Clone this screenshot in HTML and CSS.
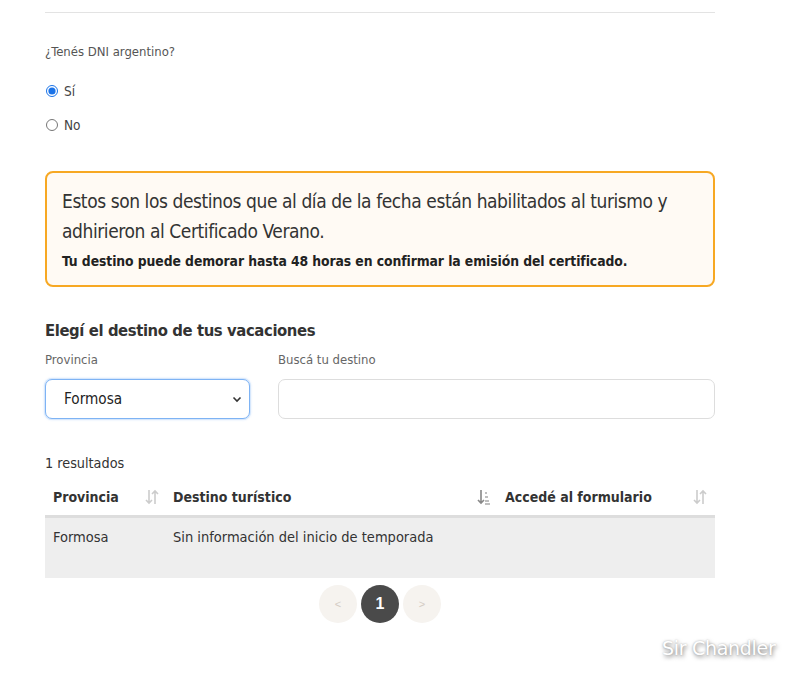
FILE: index.html
```html
<!DOCTYPE html>
<html lang="es">
<head>
<meta charset="utf-8">
<link rel="stylesheet" href="styles.css">
</head>
<body>
<main class="page">
  <hr class="rule">
  <div class="question">
    <p class="q-label">¿Tenés DNI argentino?</p>
    <label class="radio radio-yes"><input type="radio" name="dni" checked> <span>Sí</span></label>
    <label class="radio radio-no"><input type="radio" name="dni"> <span>No</span></label>
  </div>

  <div class="alert">
    <p class="alert-lead">Estos son los destinos que al día de la fecha están habilitados al turismo y adhirieron al Certificado Verano.</p>
    <p class="alert-note">Tu destino puede demorar hasta 48 horas en confirmar la emisión del certificado.</p>
  </div>

  <h2 class="section-title">Elegí el destino de tus vacaciones</h2>
  <div class="filters">
    <div class="field field-select">
      <label class="field-label">Provincia</label>
      <div class="select">
        <span>Formosa</span>
        <svg class="chev" width="10" height="7" viewBox="0 0 10 7"><path d="M1.5 1.5 L5 5 L8.5 1.5" fill="none" stroke="#333" stroke-width="1.6"/></svg>
      </div>
    </div>
    <div class="field field-search">
      <label class="field-label">Buscá tu destino</label>
      <div class="input"></div>
    </div>
  </div>

  <p class="count">1 resultados</p>
  <table class="results">
    <thead>
      <tr>
        <th class="c1"><div class="th"><span>Provincia</span><svg class="sort" width="14" height="16" viewBox="0 0 14 16"><path d="M4 1v13M1 11l3 3 3-3M10 15V2M7 5l3-3 3 3" fill="none" stroke="#ccc" stroke-width="1.6"/></svg></div></th>
        <th class="c2"><div class="th"><span>Destino turístico</span><svg class="sort" width="14" height="16" viewBox="0 0 14 16"><path d="M4 1v13M1 11l3 3 3-3" fill="none" stroke="#888" stroke-width="1.6"/><path d="M8 4h2M8 8h3M8 12h4M8 15h5" fill="none" stroke="#aaa" stroke-width="1.4"/></svg></div></th>
        <th class="c3"><div class="th"><span>Accedé al formulario</span><svg class="sort" width="14" height="16" viewBox="0 0 14 16"><path d="M4 1v13M1 11l3 3 3-3M10 15V2M7 5l3-3 3 3" fill="none" stroke="#ccc" stroke-width="1.6"/></svg></div></th>
      </tr>
    </thead>
    <tbody>
      <tr>
        <td>Formosa</td>
        <td>Sin información del inicio de temporada</td>
        <td></td>
      </tr>
    </tbody>
  </table>

  <nav class="pager">
    <span class="pg pg-off">&lt;</span>
    <span class="pg pg-on">1</span>
    <span class="pg pg-off">&gt;</span>
  </nav>
</main>
<div class="watermark">Sir Chandler</div>
</body>
</html>
```
FILE: styles.css
```css
* { box-sizing: border-box; }
html, body { margin: 0; padding: 0; background: #fff; }
body {
  font-family: "DejaVu Sans Condensed", "Roboto", sans-serif;
  color: #333;
  width: 800px;
  height: 681px;
  overflow: hidden;
  position: relative;
}
.page {
  width: 670px;
  margin-left: 45px;
  padding-top: 12px;
}
.rule {
  border: 0;
  border-top: 1px solid #e3e3e3;
  margin: 0;
}
.question { display: flex; flex-direction: column; }
.q-label {
  margin: 30px 0 0;
  font-size: 13px;
  color: #555;
  line-height: 18px;
}
.radio {
  display: flex;
  align-items: center;
  gap: 6px;
  font-size: 13.5px;
  color: #444;
  height: 18px;
}
.radio input { margin: 0 0 0 1px; width: 12px; height: 12px; accent-color: #1a73e8; }
.radio-yes { margin-top: 21px; }
.radio-no { margin-top: 16px; }
.alert {
  margin-top: 37px;
  border: 2px solid #f7a823;
  border-radius: 8px;
  background: #fffaf4;
  padding: 13px 15px 14px;
}
.alert-lead {
  margin: 0;
  font-size: 19px;
  letter-spacing: -0.42px;
  line-height: 30px;
  color: #333;
}
.alert-note {
  margin: 5px 0 0;
  font-size: 13.8px;
  letter-spacing: -0.08px;
  font-weight: bold;
  line-height: 20px;
  color: #222;
}
.section-title {
  margin: 33px 0 0;
  font-size: 16.5px;
  letter-spacing: -0.4px;
  font-weight: bold;
  color: #333;
  line-height: 22px;
}
.filters {
  display: flex;
  gap: 28px;
  margin-top: 9px;
}
.field { display: flex; flex-direction: column; }
.field-select { width: 205px; }
.field-search { flex: 1; }
.field-label {
  font-size: 13px;
  color: #666;
  line-height: 18px;
  height: 18px;
}
.select, .input {
  margin-top: 10px;
  height: 40px;
  border: 1px solid #ddd;
  border-radius: 7px;
  background: #fff;
}
.select {
  border-color: #7eb3f4;
  box-shadow: 0 0 0 1px #d6e7fc, 0 0 3px rgba(60,140,240,0.4);
  display: flex;
  align-items: center;
  justify-content: space-between;
  padding: 0 7px 0 18px;
  font-size: 15.2px;
  color: #222;
}
.count {
  margin: 35px 0 0;
  font-size: 14.3px;
  line-height: 18px;
  color: #333;
}
.results {
  width: 100%;
  border-collapse: collapse;
  margin-top: 8px;
}
.results th {
  text-align: left;
  font-size: 14px;
  font-weight: bold;
  color: #333;
  padding: 0;
  height: 36px;
  border-bottom: 3px solid #ddd;
}
.th {
  display: flex;
  align-items: center;
  justify-content: space-between;
  padding: 0 8px 0 8px;
}
.c1 { width: 120px; }
.c2 { width: 332px; }
.c1 .th { padding-right: 6px; }
.c2 .th { padding-right: 6px; }
.sort { display: block; }
.results td {
  background: #eeeeee;
  font-size: 14.5px;
  color: #333;
  vertical-align: top;
  padding: 11px 8px 0;
  height: 62px;
}
.pager {
  display: flex;
  justify-content: center;
  gap: 4px;
  margin-top: 7px;
}
.pg {
  width: 38px;
  height: 38px;
  border-radius: 50%;
  display: flex;
  align-items: center;
  justify-content: center;
  font-family: "Liberation Sans", Arial, sans-serif;
}
.pg-off { background: #f6f3ef; color: #d4ccc4; font-size: 11px; }
.pg-on { background: #4a4a4a; color: #fff; font-weight: bold; font-size: 16px; }
.watermark {
  position: absolute;
  left: 662px;
  top: 637px;
  font-family: "DejaVu Sans", sans-serif;
  font-size: 19px;
  color: #fff;
  text-shadow: 1px 2px 4px rgba(0,0,0,0.5), 0 0 2px rgba(0,0,0,0.25);
  letter-spacing: -0.3px;
}
```
